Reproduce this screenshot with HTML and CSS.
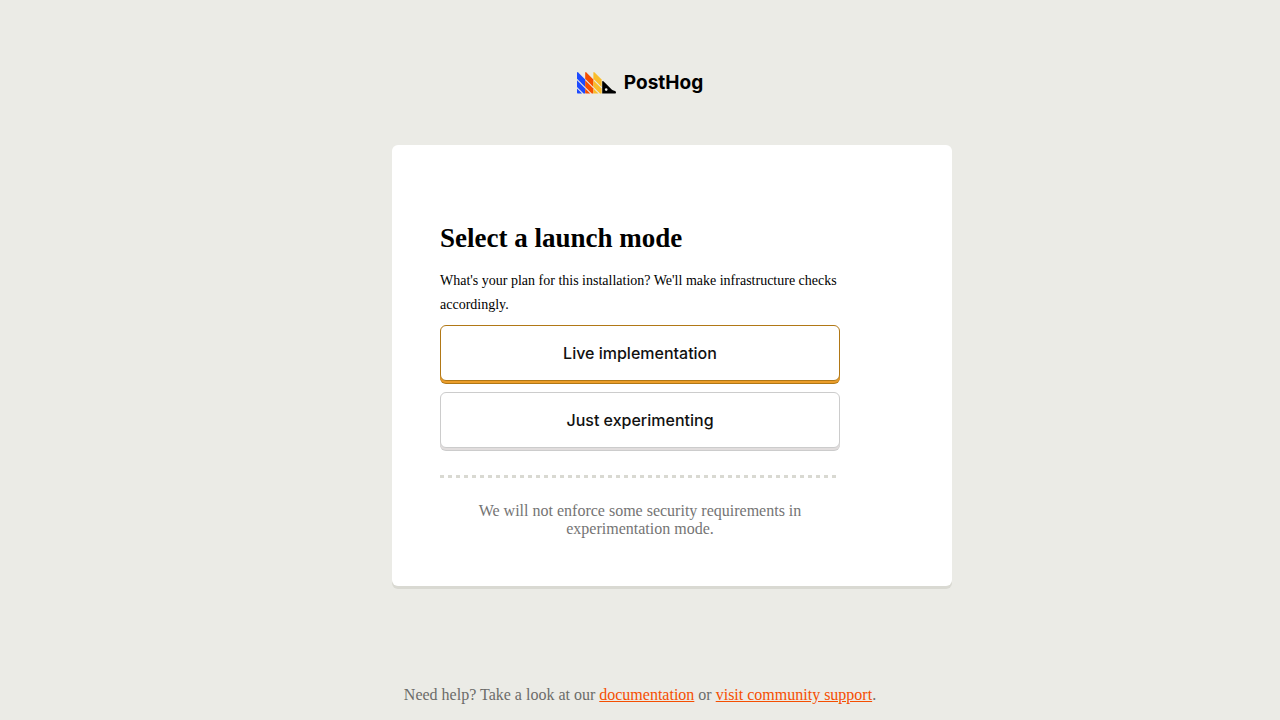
FILE: index.html
```html
<!DOCTYPE html>
<html lang="en">
<head>
<meta charset="utf-8">
<meta name="viewport" content="width=device-width, initial-scale=1">
<title>PostHog</title>
<link rel="stylesheet" href="styles.css">
</head>
<body>
<div class="page">
  <header class="brand">
    <svg class="brand-mark" width="40" height="22" viewBox="0 0 40 22" aria-hidden="true">
      <defs>
        <g id="quills"><path d="M0 1Q0-.6 1.200.5L8.200 7.500V14.900L0 6.700z"/><path d="M0 8.200 8.200 16.400V21.500H6.600L0 14.900z"/><path d="M0 16.400 5.100 21.500H.7Q0 21.500 0 20.800z"/></g>
      </defs>
      <use href="#quills" fill="#1d4aff"/>
      <use href="#quills" x="8.200" fill="#f54e00"/>
      <use href="#quills" x="16.400" fill="#f9bd2b"/>
      <path d="M25.200 10Q25.200 8.300 26.400 9.300L34.700 17.600Q35.700 18.600 37.300 18.800Q39 19.100 39 20.500Q39 21.500 38.200 21.500H25.200z"/>
      <circle cx="29.200" cy="17.600" r="1.300" fill="#ebebe6"/>
    </svg>
    <span class="brand-name">PostHog</span>
  </header>
  <main class="stage">
    <section class="card">
      <div class="content">
        <h1 class="title">Select a launch mode</h1>
        <p class="lead">What's your plan for this installation? We'll make infrastructure checks accordingly.</p>
        <div class="choices">
          <button class="choice choice-primary" type="button">Live implementation</button>
          <button class="choice" type="button">Just experimenting</button>
        </div>
        <div class="divider"></div>
        <p class="note">We will not enforce some security requirements in experimentation mode.</p>
      </div>
    </section>
  </main>
  <footer class="help">Need help? Take a look at our <a class="link" href="#">documentation</a> or <a class="link" href="#">visit community support</a>.</footer>
</div>
</body>
</html>
```
FILE: styles.css
```css
* { box-sizing: border-box; }
body {
  margin: 0;
  background: #ebebe6;
  color: #000;
  font: 16px/18px "Liberation Serif", serif;
}
.page {
  display: flex;
  flex-direction: column;
  min-height: 100vh;
}
.brand {
  display: flex;
  justify-content: center;
  align-items: center;
  gap: 7px;
  padding: 70px 0 49px;
}
.brand-mark { display: block; overflow: visible; }
.brand-name {
  font: 700 19px/26px Inter, sans-serif;
}
.stage {
  width: 100%;
  max-width: 496px;
  margin: 0 auto;
}
.card {
  width: calc(100% + 64px);
  padding: 76px 48px 48px;
  background: #fff;
  border-radius: 6px;
  box-shadow: 0 3px 0 #d9d9d2;
}
.content { max-width: 400px; }
.title {
  margin: 0 0 14px;
  font-size: 27px;
  line-height: 34px;
}
.lead {
  margin: 0 0 8px;
  font-size: 14px;
  line-height: 24px;
}
.choices {
  display: flex;
  flex-direction: column;
  gap: 8px;
}
.choice {
  width: 100%;
  margin: 0 0 3px;
  padding: 15px 16px;
  border: 1px solid #ccc;
  border-radius: 6px;
  background: #fff;
  box-shadow: 0 2px 0 #e1dddd, 0 3px 0 #ccc;
  color: #111;
  font: 500 16px/24px Inter, sans-serif;
  cursor: pointer;
}
.choice-primary {
  border-color: #b17816;
  box-shadow: 0 2px 0 #eb9d2a, 0 3px 0 #b17816;
}
.divider {
  height: 3px;
  margin: 24px 0;
  background: repeating-linear-gradient(90deg, #d9d9d2 0 4px, transparent 4px 8px);
}
.note {
  margin: 0;
  color: #747474;
  text-align: center;
}
.help {
  margin-top: auto;
  padding: 16px;
  color: #6b6b69;
  text-align: center;
}
.link { color: #f54e00; }
```
